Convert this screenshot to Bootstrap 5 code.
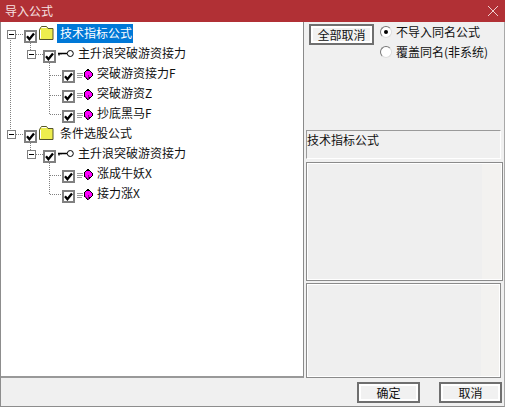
<!DOCTYPE html>
<html lang="zh">
<head>
<meta charset="utf-8">
<title>导入公式</title>
<link href="https://cdn.jsdelivr.net/npm/bootstrap@5.3.0/dist/css/bootstrap.min.css" rel="stylesheet">
<style>
html,body{height:100%;margin:0}
body{background:#f0f0f0;font:12px/16px "Noto Sans CJK SC","Liberation Sans",sans-serif;color:#111;overflow:hidden}
.dlg{width:505px;height:407px;border-left:1px solid #8d8d8d;border-right:1px solid #a8a8a8;border-bottom:1px solid #8d8d8d}
.cap{height:22px;flex:none;margin:0 -1px;background:#b13035;color:#f6e2e2;padding:0 5px;font-size:12px;line-height:20px}
.cap-x{width:10px;height:10px;margin-right:2px}
.main{height:356px;flex:none}
.tree{width:303px;background:#fff;border-right:1px solid #8a8a8a;border-bottom:2px solid #999;padding-top:2px}
.lines{position:absolute;left:-1px;top:0;pointer-events:none}
.trow{height:20px}
.l0{padding-left:23px}
.l1{padding-left:42px}
.l2{padding-left:61px}
.cbx{width:13px;height:13px;border:2px solid #808080;background:#fff;flex:none;margin-top:6px}
.cbx svg{display:block}
.ic-f{width:16px;height:14px;flex:none;margin:2px 0 0 1px}
.ic-k{width:16px;height:8px;flex:none;margin:6px 0 0 2px}
.ic-g{width:16px;height:11px;flex:none;margin:5px 0 0 2px}
.tx{padding-left:4px;white-space:nowrap;margin-top:1px}
.l0 .tx{margin:0 0 0 3px;padding:0 1px 0 3px;height:19px;line-height:18px}
.sel{background:#0078d7;color:#fff}
.side{width:200px;padding:2px 0 0 2px}
.wbtn{background:#f1f1f1;border:2px solid #6f6f6f;border-radius:0;color:#111;padding:0;font-size:12px;line-height:16px;box-shadow:inset 0 0 0 2px #fff}
.wbtn:hover{background:#f1f1f1;border-color:#6f6f6f;color:#111}
.b-all{width:65px;height:21px;margin-left:3px}
.rads{padding-left:6px;margin-top:-2px}
.radr{height:20px}
.rad{width:12px;height:12px;border-radius:50%;background:#fff;border:1px solid;border-color:#777 #ddd #ddd #777;flex:none;margin-right:4px}
.rad i{display:block;width:4px;height:4px;border-radius:50%;background:#000}
.cap-lbl{height:29px;margin-top:68px;width:195px;border:1px solid #9a9a9a;border-bottom-color:#fff;border-right-color:#fff;line-height:18px}
.box{border:1px solid #8a8a8a;box-shadow:inset 0 0 0 1px #fff;background:linear-gradient(90deg,#efefef 90%,#f3f2f0 90%)}
.b1{width:197px;height:119px;margin-top:3px}
.b2{width:195px;height:95px;margin-top:2px}
.foot{padding:4px 2px 0 0}
.b-ok{width:63px;height:21px}
.b-no{margin-left:19px}
</style>
</head>
<body>
<svg width="0" height="0" class="d-block">
  <defs>
    <symbol id="chk" viewBox="0 0 9 9"><path d="M1 4.2l2.4 3L8 1.5" stroke="#000" stroke-width="2.3" fill="none"/></symbol>
    <symbol id="fold" viewBox="0 0 16 14"><path d="M1.5 13.5V3.5L3.5 .5h5l1.5 2h5v11z" fill="#eded4e" stroke="#55552a"/><path d="M2.5 12.5V4M3.5 1.5h5" stroke="#fff" fill="none"/></symbol>
    <symbol id="key" viewBox="0 0 16 8"><path d="M0 3.5h9M1 3.5v2M3 3.5v1" stroke="#000" stroke-width="1.3" fill="none"/><circle cx="12.3" cy="3.5" r="3" fill="#fff" stroke="#000"/></symbol>
    <symbol id="gem" viewBox="0 0 16 11"><path d="M0 4.5h6M0 6.5h6M0 8.5h5" stroke="#9a9a9a" fill="none"/><path d="M11 .5l4 3.5v3L11 10.5 7 7V4z" fill="#f0f" stroke="#000" shape-rendering="crispEdges"/><path d="M8 7.5l3 2.5V6" stroke="#900090" fill="none" shape-rendering="crispEdges"/></symbol>
  </defs>
</svg>
<div class="dlg d-flex flex-column">
  <div class="cap d-flex justify-content-between align-items-center">
    <span>导入公式</span>
    <svg class="cap-x" viewBox="0 0 10 10"><path d="M0 0L10 10M10 0L0 10" stroke="#eecfcf" fill="none"/></svg>
  </div>
  <div class="main d-flex">
    <div class="tree position-relative">
      <svg class="lines" width="303" height="220" viewBox="0 0 303 220">
        <g stroke="#808080" stroke-dasharray="1 1" fill="none">
          <path d="M10.5 16V108"/><path d="M16 12.5H24"/><path d="M16 112.5H24"/>
          <path d="M30.5 21V29"/><path d="M30.5 121V129"/><path d="M36 32.5H43"/><path d="M36 132.5H43"/>
          <path d="M49.5 41V92.5H62"/><path d="M50 53.5H62"/><path d="M50 73.5H62"/>
          <path d="M49.5 141V172.5H62"/><path d="M50 153.5H62"/>
        </g>
        <g fill="#fff" stroke="#808080">
          <rect x="7.5" y="8.5" width="8" height="8"/><rect x="7.5" y="108.5" width="8" height="8"/>
          <rect x="27.5" y="28.5" width="8" height="8"/><rect x="27.5" y="128.5" width="8" height="8"/>
        </g>
        <path d="M9 12.5h5M9 112.5h5M29 32.5h5M29 132.5h5" stroke="#000"/>
      </svg>
      <div class="trow l0 d-flex align-items-start">
        <span class="cbx"><svg width="9" height="9"><use href="#chk"/></svg></span>
        <svg class="ic-f"><use href="#fold"/></svg>
        <span class="tx sel">技术指标公式</span>
      </div>
      <div class="trow l1 d-flex align-items-start">
        <span class="cbx"><svg width="9" height="9"><use href="#chk"/></svg></span>
        <svg class="ic-k"><use href="#key"/></svg>
        <span class="tx">主升浪突破游资接力</span>
      </div>
      <div class="trow l2 d-flex align-items-start">
        <span class="cbx"><svg width="9" height="9"><use href="#chk"/></svg></span>
        <svg class="ic-g"><use href="#gem"/></svg>
        <span class="tx">突破游资接力F</span>
      </div>
      <div class="trow l2 d-flex align-items-start">
        <span class="cbx"><svg width="9" height="9"><use href="#chk"/></svg></span>
        <svg class="ic-g"><use href="#gem"/></svg>
        <span class="tx">突破游资Z</span>
      </div>
      <div class="trow l2 d-flex align-items-start">
        <span class="cbx"><svg width="9" height="9"><use href="#chk"/></svg></span>
        <svg class="ic-g"><use href="#gem"/></svg>
        <span class="tx">抄底黑马F</span>
      </div>
      <div class="trow l0 d-flex align-items-start">
        <span class="cbx"><svg width="9" height="9"><use href="#chk"/></svg></span>
        <svg class="ic-f"><use href="#fold"/></svg>
        <span class="tx">条件选股公式</span>
      </div>
      <div class="trow l1 d-flex align-items-start">
        <span class="cbx"><svg width="9" height="9"><use href="#chk"/></svg></span>
        <svg class="ic-k"><use href="#key"/></svg>
        <span class="tx">主升浪突破游资接力</span>
      </div>
      <div class="trow l2 d-flex align-items-start">
        <span class="cbx"><svg width="9" height="9"><use href="#chk"/></svg></span>
        <svg class="ic-g"><use href="#gem"/></svg>
        <span class="tx">涨成牛妖X</span>
      </div>
      <div class="trow l2 d-flex align-items-start">
        <span class="cbx"><svg width="9" height="9"><use href="#chk"/></svg></span>
        <svg class="ic-g"><use href="#gem"/></svg>
        <span class="tx">接力涨X</span>
      </div>
    </div>
    <div class="side d-flex flex-column">
      <div class="d-flex">
        <button type="button" class="btn wbtn b-all">全部取消</button>
        <div class="rads">
          <div class="radr d-flex align-items-center"><span class="rad d-flex align-items-center justify-content-center"><i></i></span>不导入同名公式</div>
          <div class="radr d-flex align-items-center"><span class="rad"></span>覆盖同名(非系统)</div>
        </div>
      </div>
      <div class="cap-lbl">技术指标公式</div>
      <div class="box b1"></div>
      <div class="box b2"></div>
    </div>
  </div>
  <div class="foot d-flex justify-content-end">
    <button type="button" class="btn wbtn b-ok">确定</button>
    <button type="button" class="btn wbtn b-ok b-no">取消</button>
  </div>
</div>
<script src="https://cdn.jsdelivr.net/npm/bootstrap@5.3.0/dist/js/bootstrap.bundle.min.js"></script>
</body>
</html>
